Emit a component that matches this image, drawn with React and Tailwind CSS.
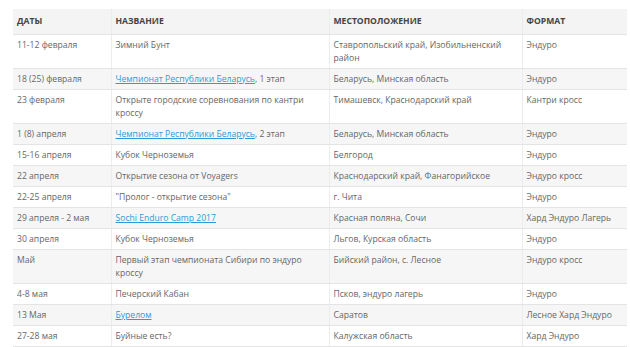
import React from "react";

const rows = [
  ["11-12 февраля", [{ t: "Зимний Бунт" }], "Ставропольский край, Изобильненский район", "Эндуро"],
  ["18 (25) февраля", [{ t: "Чемпионат Республики Беларусь", link: true }, { t: ", 1 этап" }], "Беларусь, Минская область", "Эндуро"],
  ["23 февраля", [{ t: "Открыте городские соревнования по кантри кроссу" }], "Тимашевск, Краснодарский край", "Кантри кросс"],
  ["1 (8) апреля", [{ t: "Чемпионат Республики Беларусь", link: true }, { t: ", 2 этап" }], "Беларусь, Минская область", "Эндуро"],
  ["15-16 апреля", [{ t: "Кубок Черноземья" }], "Белгород", "Эндуро"],
  ["22 апреля", [{ t: "Открытие сезона от Voyagers" }], "Краснодарский край, Фанагорийское", "Эндуро кросс"],
  ["22-25 апреля", [{ t: "\"Пролог - открытие сезона\"" }], "г. Чита", "Эндуро"],
  ["29 апреля - 2 мая", [{ t: "Sochi Enduro Camp 2017", link: true }], "Красная поляна, Сочи", "Хард Эндуро Лагерь"],
  ["30 апреля", [{ t: "Кубок Черноземья" }], "Льгов, Курская область", "Эндуро"],
  ["Май", [{ t: "Первый этап чемпионата Сибири по эндуро кроссу" }], "Бийский район, с. Лесное", "Эндуро кросс"],
  ["4-8 мая", [{ t: "Печерский Кабан" }], "Псков, эндуро лагерь", "Эндуро"],
  ["13 Мая", [{ t: "Бурелом", link: true }], "Саратов", "Лесное Хард Эндуро"],
  ["27-28 мая", [{ t: "Буйные есть?" }], "Калужская область", "Хард Эндуро"],
];

export default function App() {
  return (
    <div
      className="w-[630px] h-[347px] overflow-hidden bg-white pl-[13px] pr-[3px] pt-[9px]"
      style={{ fontFamily: '"Open Sans", "Liberation Sans", sans-serif' }}
    >
      <table className="w-[614px] border-collapse table-fixed text-[8.6px] leading-[13px] text-[#666666]">
        <colgroup>
          <col className="w-[98px]" />
          <col className="w-[218px]" />
          <col className="w-[193px]" />
          <col className="w-[105px]" />
        </colgroup>
        <thead>
          <tr className="bg-[#f4f4f4]">
            {["ДАТЫ", "НАЗВАНИЕ", "МЕСТОПОЛОЖЕНИЕ", "ФОРМАТ"].map((h, i) => (
              <th
                key={h}
                className={`text-left align-middle font-bold text-[#444444] h-[25px] px-[4px] pt-[1px] border-b border-[#e4e4e4] ${i > 0 ? "border-l border-l-[#ececec]" : ""}`}
              >
                {h}
              </th>
            ))}
          </tr>
        </thead>
        <tbody>
          {rows.map((r, idx) => (
            <tr key={idx} className={idx % 2 === 1 ? "bg-[#f6f6f6]" : "bg-white"}>
              <td className="align-top px-[4px] pt-[4px] pb-[3px] border-b border-[#e4e4e4]">{r[0]}</td>
              <td className="align-top px-[4px] pt-[4px] pb-[3px] border-b border-[#e4e4e4] border-l border-l-[#ececec]">
                {r[1].map((p, j) =>
                  p.link ? (
                    <a key={j} href="#" className="text-[#2f9ad8] underline">
                      {p.t}
                    </a>
                  ) : (
                    <span key={j}>{p.t}</span>
                  )
                )}
              </td>
              <td className="align-top px-[4px] pt-[4px] pb-[3px] border-b border-[#e4e4e4] border-l border-l-[#ececec]">{r[2]}</td>
              <td className="align-top px-[4px] pt-[4px] pb-[3px] border-b border-[#e4e4e4] border-l border-l-[#ececec]">{r[3]}</td>
            </tr>
          ))}
        </tbody>
      </table>
    </div>
  );
}
